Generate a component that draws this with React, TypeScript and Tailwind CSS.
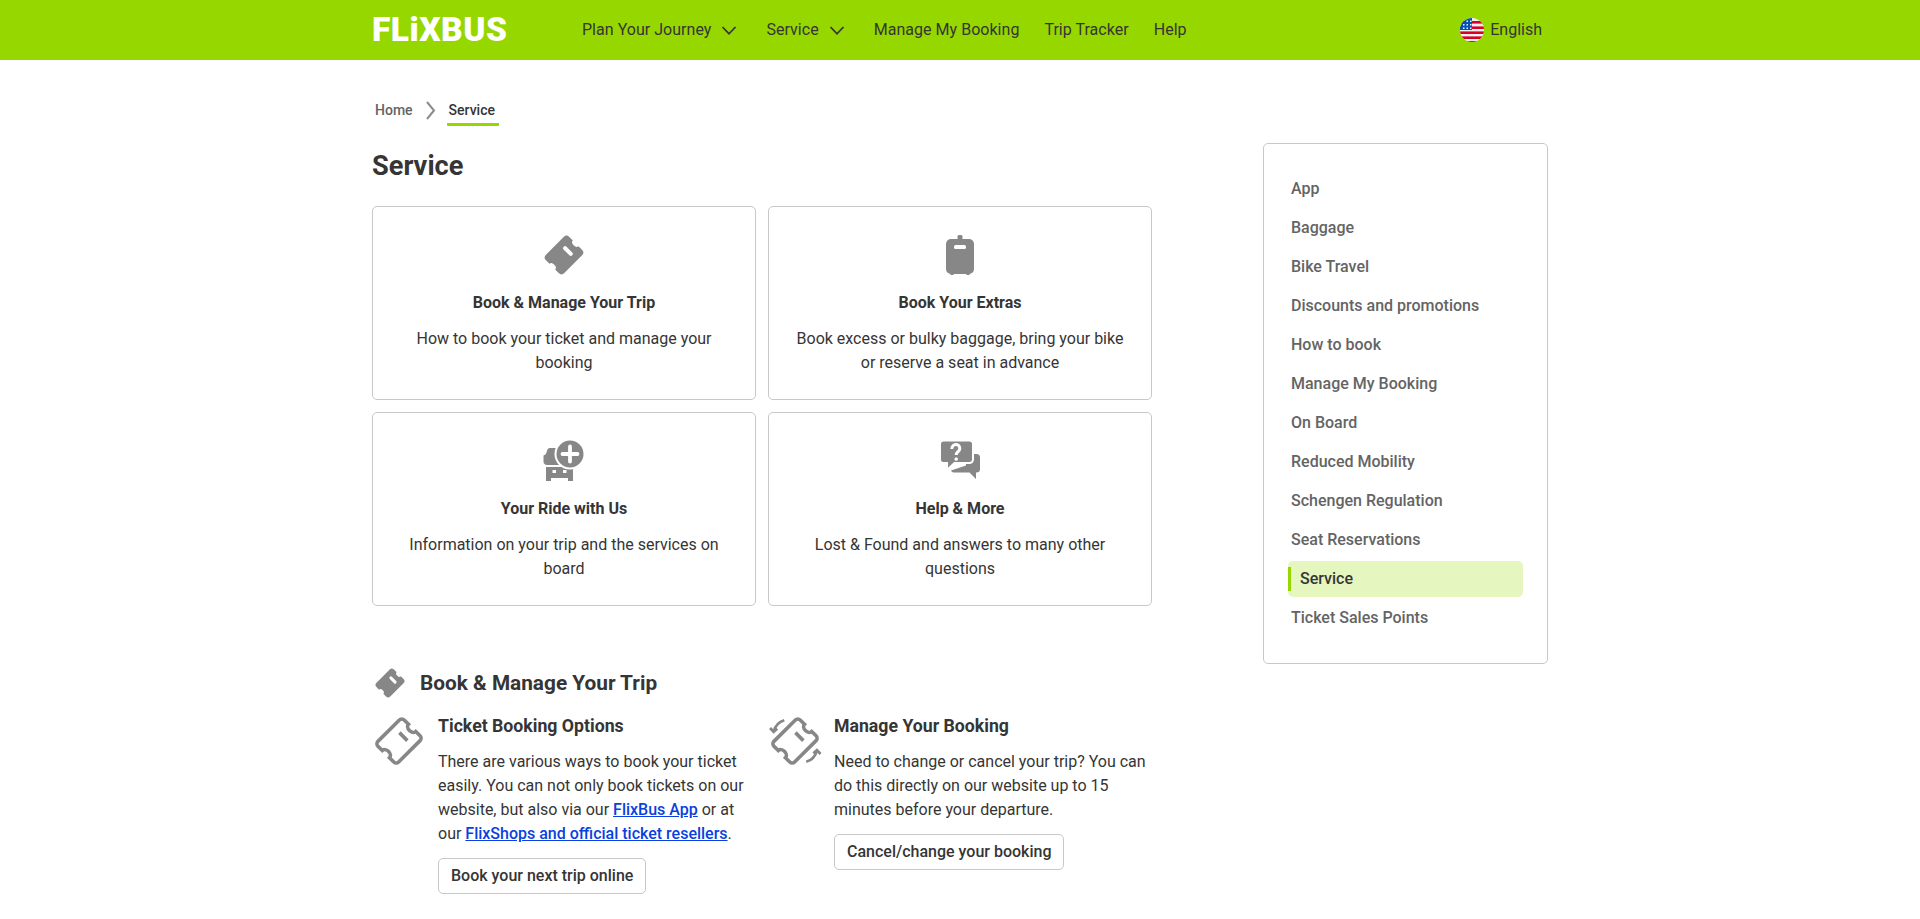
const GREEN = "bg-[#97d700]";

const SIDE_LINKS = [
  "App",
  "Baggage",
  "Bike Travel",
  "Discounts and promotions",
  "How to book",
  "Manage My Booking",
  "On Board",
  "Reduced Mobility",
  "Schengen Regulation",
  "Seat Reservations",
  "Service",
  "Ticket Sales Points",
];

function Chevron() {
  return (
    <svg width="24" height="24" viewBox="0 0 24 24" fill="none" stroke="#353535" strokeWidth="1.8">
      <path d="M5.500 9l6.500 6.800L18.500 9" />
    </svg>
  );
}

function Flag() {
  return (
    <svg width="24" height="24" viewBox="0 0 24 24">
      <defs>
        <clipPath id="flag-clip">
          <circle cx="12" cy="12" r="12" />
        </clipPath>
      </defs>
      <g clipPath="url(#flag-clip)">
        <rect width="24" height="24" fill="#f0f0f0" />
        <rect y="3" width="24" height="2.600" fill="#d80027" />
        <rect y="8.400" width="24" height="2.600" fill="#d80027" />
        <rect y="13.400" width="24" height="2.600" fill="#d80027" />
        <rect y="18.400" width="24" height="2.600" fill="#d80027" />
        <rect y="23" width="24" height="1" fill="#d80027" />
        <rect width="12" height="12" fill="#0052b4" />
        <g fill="#f0f0f0">
          <rect x="3" y="6" width="1.500" height="1.500" />
          <rect x="6.500" y="6" width="1.500" height="1.500" />
          <rect x="10" y="6" width="1.500" height="1.500" />
          <rect x="6.500" y="2.500" width="1.500" height="1.500" />
          <rect x="10" y="2.500" width="1.500" height="1.500" />
          <rect x="3" y="9.500" width="1.500" height="1.500" />
          <rect x="6.500" y="9.500" width="1.500" height="1.500" />
          <rect x="10" y="9.500" width="1.500" height="1.500" />
        </g>
      </g>
    </svg>
  );
}

function TicketSolid({ size = 48 }: { size?: number }) {
  return (
    <svg width={size} height={size} viewBox="0 0 48 48">
      <g transform="rotate(45 24 24)">
        <path
          d="M15 7.500h5a4 2.800 0 0 0 8 0h5a4 4 0 0 1 4 4v25a4 4 0 0 1-4 4h-5a4 2.800 0 0 0-8 0h-5a4 4 0 0 1-4-4v-25a4 4 0 0 1 4-4z"
          fill="#878787"
        />
        <rect x="18" y="16.400" width="12" height="4" rx="2" fill="#fff" />
      </g>
    </svg>
  );
}

function BaggageIcon() {
  return (
    <svg width="48" height="48" viewBox="0 0 48 48" fill="#878787">
      <rect x="21.500" y="4" width="5" height="6" rx="1.500" />
      <rect x="10" y="8" width="28" height="35" rx="5" />
      <rect x="14" y="41" width="4" height="3" rx="1.500" />
      <rect x="30" y="41" width="4" height="3" rx="1.500" />
      <rect x="18" y="14" width="12" height="4" rx="1.600" fill="#fff" />
    </svg>
  );
}

function RideIcon() {
  return (
    <svg width="48" height="48" viewBox="0 0 48 48" fill="#878787">
      <path d="M10 11h7c2 0 3 1.500 3 3v14H7c-2 0-3.500-1.500-3.500-3.500v-6c1.500-.5 2.500-1.500 3-3C7 13 8 11 10 11z" />
      <path d="M6 30h27v14h-5v-3H11v3H6z" />
      <rect x="12.500" y="33" width="3.500" height="3" fill="#fff" />
      <rect x="23" y="33" width="3.500" height="3" fill="#fff" />
      <circle cx="30" cy="17" r="15.500" fill="#fff" />
      <circle cx="30" cy="17" r="13.500" />
      <path d="M30 9.500v15M22.500 17h15" stroke="#fff" strokeWidth="3.800" strokeLinecap="round" />
    </svg>
  );
}

function HelpIcon() {
  return (
    <svg width="48" height="48" viewBox="0 0 48 48" fill="#878787">
      <path d="M30 17h10.500a3.500 3.500 0 0 1 3.500 3.500V32a3.500 3.500 0 0 1-3.500 3.500H40V42l-6.500-6.500H18a3 3 0 0 1-3-2l15-5z" />
      <path
        d="M7.500 3.500h26A3.500 3.500 0 0 1 37 7v15.500a3.500 3.500 0 0 1-3.500 3.500H18.500L11 33v-7H7.500A3.500 3.500 0 0 1 4 22.500V7a3.500 3.500 0 0 1 3.500-3.500z"
        stroke="#fff"
        strokeWidth="2"
      />
      <path
        d="M15.800 12c0-2.800 1.800-4.400 4-4.400 2.400 0 4 1.600 4 3.800 0 3.200-3.600 3.400-3.600 6.600"
        fill="none"
        stroke="#fff"
        strokeWidth="3"
      />
      <rect x="18.600" y="20.400" width="3.200" height="3.400" rx="1.200" fill="#fff" />
    </svg>
  );
}

function TicketOutline({ arrows = false }: { arrows?: boolean }) {
  return (
    <svg width="54" height="54" viewBox="0 0 48 48" fill="none" stroke="#878787">
      <g transform="rotate(45 24 24)">
        <path
          d="M14 7.500h5.500a4.500 3.400 0 0 0 9 0H34a3 3 0 0 1 3 3v27a3 3 0 0 1-3 3h-5.500a4.500 3.400 0 0 0-9 0H14a3 3 0 0 1-3-3v-27a3 3 0 0 1 3-3z"
          strokeWidth="3.200"
        />
        <path d="M19 18.500h10" strokeWidth="3.200" />
      </g>
      {arrows && (
        <g strokeWidth="2.400">
          <path d="M5 15.500C6.500 10 9.500 7 14.500 5.500" />
          <path d="M1.800 12.500l3.200 3.300 3.200-2.800" />
          <path d="M43.500 32.500C42 38 39 41 34 42.500" />
          <path d="M46.700 35.500l-3.200-3.300-3.200 2.800" />
        </g>
      )}
    </svg>
  );
}

function ServiceCard({ icon, title, text }: { icon: React.ReactNode; title: string; text: string }) {
  return (
    <div className="flex h-[194px] flex-col items-center rounded-[5px] border border-[#c8c8c8] px-6 pt-6 text-center">
      {icon}
      <h3 className="mt-3 text-base/6 font-bold">{title}</h3>
      <p className="mt-3 text-base/6">{text}</p>
    </div>
  );
}

function Button({ children }: { children: string }) {
  return (
    <a className="mt-3 inline-flex h-9 items-center rounded-[5px] border border-[#c8c8c8] px-3 text-base font-medium">
      {children}
    </a>
  );
}

const LINK = "font-medium text-[#0a3fe0] underline";

export default function App() {
  return (
    <div className="min-h-[919px] overflow-hidden bg-white font-['Roboto',sans-serif] text-[#353535]">
      <header className={`h-[60px] ${GREEN}`}>
        <div className="mx-auto flex h-full w-[1176px] items-center pr-[6px]">
          <a className="flex w-[134px] select-none text-[33.5px]/6 font-black tracking-[0.5px] text-white">FLiXBUS</a>
          <nav className="ml-[76px] flex items-center gap-[25px] text-base tracking-[0.03px]">
            <a className="flex items-center gap-[6px]">
              Plan Your Journey
              <Chevron />
            </a>
            <a className="flex items-center gap-[6px]">
              Service
              <Chevron />
            </a>
            <a>Manage My Booking</a>
            <a>Trip Tracker</a>
            <a>Help</a>
          </nav>
          <a className="ml-auto flex items-center gap-[6px] text-base">
            <Flag />
            English
          </a>
        </div>
      </header>

      <main className="mx-auto flex w-[1176px] items-start">
        <div className="w-[780px]">
          <nav className="mt-[38px] flex h-7 items-start pl-[3px] text-sm/6 font-medium">
            <a className="text-[#646464]">Home</a>
            <svg className="ml-[9px] mr-[5px] mt-[1px]" width="20" height="22" viewBox="0 0 20 22" fill="none" stroke="#8b8b8b" strokeWidth="2">
              <path d="M5 3l7 8.500L5 20" />
            </svg>
            <span className="h-7 rounded-b-[1px] border-b-[3px] border-[#97d700] pl-[2px] pr-[4px]">Service</span>
          </nav>

          <h1 className="mt-[22px] text-[27.2px]/9 font-bold">Service</h1>

          <div className="mt-[22px] grid grid-cols-2 gap-3">
            <ServiceCard
              icon={<TicketSolid />}
              title="Book & Manage Your Trip"
              text="How to book your ticket and manage your booking"
            />
            <ServiceCard
              icon={<BaggageIcon />}
              title="Book Your Extras"
              text="Book excess or bulky baggage, bring your bike or reserve a seat in advance"
            />
            <ServiceCard
              icon={<RideIcon />}
              title="Your Ride with Us"
              text="Information on your trip and the services on board"
            />
            <ServiceCard
              icon={<HelpIcon />}
              title="Help & More"
              text="Lost & Found and answers to many other questions"
            />
          </div>

          <section className="mt-[63px]">
            <div className="flex h-7 items-center">
              <TicketSolid size={36} />
              <h2 className="ml-3 text-[20.8px]/7 font-bold">Book &amp; Manage Your Trip</h2>
            </div>

            <div className="mt-[17px] grid grid-cols-2 gap-3">
              <div className="flex">
                <div className="w-[66px] shrink-0">
                  <TicketOutline />
                </div>
                <div>
                  <h3 className="text-[17.7px]/6 font-bold">Ticket Booking Options</h3>
                  <p className="mt-3 text-base/6">
                    There are various ways to book your ticket easily. You can not only book tickets on our website, but also via our{" "}
                    <a className={LINK}>FlixBus App</a> or at our{" "}
                    <a className={LINK}>FlixShops and official ticket resellers</a>.
                  </p>
                  <Button>Book your next trip online</Button>
                </div>
              </div>
              <div className="flex">
                <div className="w-[66px] shrink-0">
                  <TicketOutline arrows />
                </div>
                <div>
                  <h3 className="text-[17.7px]/6 font-bold">Manage Your Booking</h3>
                  <p className="mt-3 text-base/6">
                    Need to change or cancel your trip? You can do this directly on our website up to 15 minutes before your departure.
                  </p>
                  <Button>Cancel/change your booking</Button>
                </div>
              </div>
            </div>
          </section>
        </div>

        <aside className="ml-[111px] mt-[83px] h-[521px] w-[285px] rounded-[5px] border border-[#c8c8c8] px-[27px] pt-[27px]">
          <ul className="flex flex-col gap-[3px]">
            {SIDE_LINKS.map((link) =>
              link === "Service" ? (
                <li key={link} className="relative -ml-[3px] -mr-[3px] flex h-9 items-center rounded-[5px] bg-[#e5f7bf] pl-3 text-base font-medium">
                  <span className="absolute left-0 top-[6px] h-6 w-[3px] bg-[#97d700]" />
                  {link}
                </li>
              ) : (
                <li key={link} className="flex h-9 items-center text-base font-medium text-[#646464]">
                  {link}
                </li>
              ),
            )}
          </ul>
        </aside>
      </main>
    </div>
  );
}
